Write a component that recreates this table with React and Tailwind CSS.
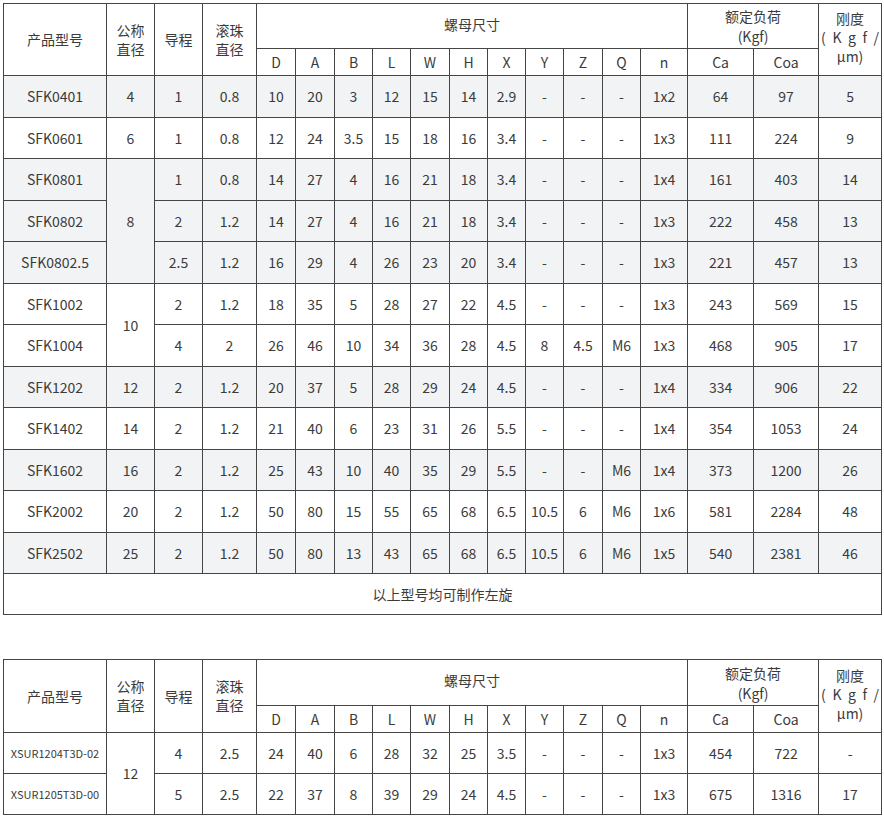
import React from "react";

const widths = [103, 48, 48, 54, 39, 39, 38, 38, 39, 38, 38, 38, 39, 38, 47, 66, 65, 63];
const letters = ["D", "A", "B", "L", "W", "H", "X", "Y", "Z", "Q", "n"];

const sfk = [
  { m: "SFK0401", d: "4", r: ["1", "0.8", "10", "20", "3", "12", "15", "14", "2.9", "-", "-", "-", "1x2", "64", "97", "5"], g: true },
  { m: "SFK0601", d: "6", r: ["1", "0.8", "12", "24", "3.5", "15", "18", "16", "3.4", "-", "-", "-", "1x3", "111", "224", "9"] },
  { m: "SFK0801", d: "8", span: 3, r: ["1", "0.8", "14", "27", "4", "16", "21", "18", "3.4", "-", "-", "-", "1x4", "161", "403", "14"], g: true },
  { m: "SFK0802", r: ["2", "1.2", "14", "27", "4", "16", "21", "18", "3.4", "-", "-", "-", "1x3", "222", "458", "13"], g: true },
  { m: "SFK0802.5", r: ["2.5", "1.2", "16", "29", "4", "26", "23", "20", "3.4", "-", "-", "-", "1x3", "221", "457", "13"], g: true },
  { m: "SFK1002", d: "10", span: 2, r: ["2", "1.2", "18", "35", "5", "28", "27", "22", "4.5", "-", "-", "-", "1x3", "243", "569", "15"] },
  { m: "SFK1004", r: ["4", "2", "26", "46", "10", "34", "36", "28", "4.5", "8", "4.5", "M6", "1x3", "468", "905", "17"] },
  { m: "SFK1202", d: "12", r: ["2", "1.2", "20", "37", "5", "28", "29", "24", "4.5", "-", "-", "-", "1x4", "334", "906", "22"], g: true },
  { m: "SFK1402", d: "14", r: ["2", "1.2", "21", "40", "6", "23", "31", "26", "5.5", "-", "-", "-", "1x4", "354", "1053", "24"] },
  { m: "SFK1602", d: "16", r: ["2", "1.2", "25", "43", "10", "40", "35", "29", "5.5", "-", "-", "M6", "1x4", "373", "1200", "26"], g: true },
  { m: "SFK2002", d: "20", r: ["2", "1.2", "50", "80", "15", "55", "65", "68", "6.5", "10.5", "6", "M6", "1x6", "581", "2284", "48"] },
  { m: "SFK2502", d: "25", r: ["2", "1.2", "50", "80", "13", "43", "65", "68", "6.5", "10.5", "6", "M6", "1x5", "540", "2381", "46"], g: true },
];

const xsur = [
  { m: "XSUR1204T3D-02", d: "12", span: 2, r: ["4", "2.5", "24", "40", "6", "28", "32", "25", "3.5", "-", "-", "-", "1x3", "454", "722", "-"], small: true },
  { m: "XSUR1205T3D-00", r: ["5", "2.5", "22", "37", "8", "39", "29", "24", "4.5", "-", "-", "-", "1x3", "675", "1316", "17"], small: true },
];

const cell = "border border-[#454545] text-center align-middle p-0";

function Head({ h1 }) {
  return (
    <thead>
      <tr style={{ height: h1 }}>
        <th rowSpan={2} className={`${cell} font-normal`}>产品型号</th>
        <th rowSpan={2} className={`${cell} font-normal leading-[19px]`}>公称<br />直径</th>
        <th rowSpan={2} className={`${cell} font-normal`}>导程</th>
        <th rowSpan={2} className={`${cell} font-normal leading-[19px]`}>滚珠<br />直径</th>
        <th colSpan={11} className={`${cell} font-normal pb-1`}>螺母尺寸</th>
        <th colSpan={2} className={`${cell} font-normal leading-[20px]`}>额定负荷<br />(Kgf)</th>
        <th rowSpan={2} className={`${cell} font-normal leading-[19px] pb-1`}>
          <div>刚度</div>
          <div className="flex justify-between px-[2px]">
            <span>(</span><span>K</span><span>g</span><span>f</span><span>/</span>
          </div>
          <div>μm)</div>
        </th>
      </tr>
      <tr className="h-[27px]">
        {letters.map((l) => (
          <th key={l} className={`${cell} font-normal`}>{l}</th>
        ))}
        <th className={`${cell} font-normal`}>Ca</th>
        <th className={`${cell} font-normal`}>Coa</th>
      </tr>
    </thead>
  );
}

function Table({ rows, h1, footer, even }) {
  return (
    <table className="table-fixed border-collapse w-[879px] text-[14px] text-[#3b3b3b]">
      <colgroup>
        {widths.map((w, i) => (
          <col key={i} style={{ width: w }} />
        ))}
      </colgroup>
      <Head h1={h1} />
      <tbody>
        {rows.map((row, i) => (
          <tr key={row.m} className={`${even || i % 2 ? "h-[41px]" : "h-[42px]"} ${row.g ? "bg-[#f2f3f5]" : "bg-white"}`}>
            <td className={`${cell} ${row.small ? "text-[11px]" : ""}`}>{row.m}</td>
            {row.d && <td rowSpan={row.span || 1} className={cell}>{row.d}</td>}
            {row.r.map((v, j) => (
              <td key={j} className={cell}>{v}</td>
            ))}
          </tr>
        ))}
        {footer && (
          <tr className="h-[41px] bg-white">
            <td colSpan={18} className={cell}>{footer}</td>
          </tr>
        )}
      </tbody>
    </table>
  );
}

export default function App() {
  return (
    <div className="bg-white w-[884px] h-[819px] pt-[3px] pl-[3px] font-['Noto_Sans_CJK_SC',sans-serif]">
      <Table rows={sfk} h1={45} footer="以上型号均可制作左旋" />
      <div className="h-[44px]" />
      <Table rows={xsur} h1={46} even />
    </div>
  );
}
